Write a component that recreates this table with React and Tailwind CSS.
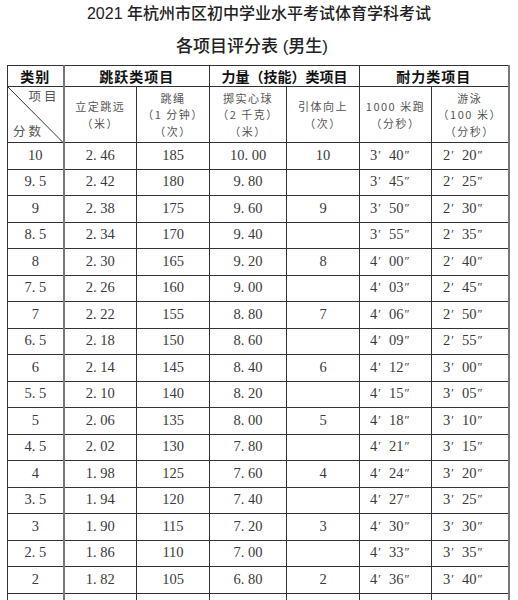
import React from "react";

const rows = [
  ["10", "2. 46", "185", "10. 00", "10", "3′", "40″", "2′", "20″"],
  ["9. 5", "2. 42", "180", "9. 80", "", "3′", "45″", "2′", "25″"],
  ["9", "2. 38", "175", "9. 60", "9", "3′", "50″", "2′", "30″"],
  ["8. 5", "2. 34", "170", "9. 40", "", "3′", "55″", "2′", "35″"],
  ["8", "2. 30", "165", "9. 20", "8", "4′", "00″", "2′", "40″"],
  ["7. 5", "2. 26", "160", "9. 00", "", "4′", "03″", "2′", "45″"],
  ["7", "2. 22", "155", "8. 80", "7", "4′", "06″", "2′", "50″"],
  ["6. 5", "2. 18", "150", "8. 60", "", "4′", "09″", "2′", "55″"],
  ["6", "2. 14", "145", "8. 40", "6", "4′", "12″", "3′", "00″"],
  ["5. 5", "2. 10", "140", "8. 20", "", "4′", "15″", "3′", "05″"],
  ["5", "2. 06", "135", "8. 00", "5", "4′", "18″", "3′", "10″"],
  ["4. 5", "2. 02", "130", "7. 80", "", "4′", "21″", "3′", "15″"],
  ["4", "1. 98", "125", "7. 60", "4", "4′", "24″", "3′", "20″"],
  ["3. 5", "1. 94", "120", "7. 40", "", "4′", "27″", "3′", "25″"],
  ["3", "1. 90", "115", "7. 20", "3", "4′", "30″", "3′", "30″"],
  ["2. 5", "1. 86", "110", "7. 00", "", "4′", "33″", "3′", "35″"],
  ["2", "1. 82", "105", "6. 80", "2", "4′", "36″", "3′", "40″"],
];

const serif = { fontFamily: '"Liberation Serif", "Noto Sans CJK SC", serif' };

function Time({ m, s }) {
  return (
    <span className="inline-flex items-baseline">
      <span>{m.replace("′", "")}</span>
      <span className="text-[12px] ml-[1px] mr-[8px] relative top-[-1px]">′</span>
      <span>{s.replace("″", "")}</span>
      <span className="text-[12px] ml-[1px] relative top-[-1px]">″</span>
    </span>
  );
}

export default function App() {
  const hd = "border border-[#333] text-center align-middle";
  const sub = "border border-[#333] text-center align-middle text-[11px] leading-[16.5px] tracking-[1.5px] text-[#555]";
  const cell = "border border-[#333] text-center";
  return (
    <div className="w-[518px] h-[600px] overflow-hidden bg-white">
      <div
        className="text-center text-[#222] font-medium"
        style={{ fontFamily: '"Liberation Sans", "Noto Sans CJK SC", sans-serif' }}
      >
        <div className="text-[16px] leading-[28px]">2021 年杭州市区初中学业水平考试体育学科考试</div>
        <div className="mt-[5px] text-[17px] leading-[28px] pr-[14px]">各项目评分表&nbsp;(男生)</div>
      </div>
      <table
        className="mt-[4px] ml-[7px] border-collapse table-fixed w-[501px]"
        style={{ fontFamily: '"Noto Sans CJK SC", sans-serif' }}
      >
        <colgroup>
          <col className="w-[56px]" />
          <col className="w-[73px]" />
          <col className="w-[73px]" />
          <col className="w-[77px]" />
          <col className="w-[73px]" />
          <col className="w-[72px]" />
          <col className="w-[77px]" />
        </colgroup>
        <thead>
          <tr className="h-[21px] text-[14px] font-bold text-[#111] leading-[18px]">
            <th className={hd + " tracking-[1px]"}>类别</th>
            <th colSpan={2} className={hd + " tracking-[1px] border-l-2 border-l-[#777]"}>跳跃类项目</th>
            <th colSpan={2} className={hd}>力量（技能）类项目</th>
            <th colSpan={2} className={hd + " tracking-[1px] border-r-2 border-r-[#777]"}>耐力类项目</th>
          </tr>
          <tr className="h-[55px]">
            <th className="border border-[#333] relative p-0 font-normal text-[12.5px] text-[#555] tracking-[3px]">
              <svg className="absolute inset-0 w-full h-full" preserveAspectRatio="none" viewBox="0 0 56 55">
                <line x1="0" y1="0" x2="56" y2="55" stroke="#333" strokeWidth="1" />
              </svg>
              <div className="flex flex-col h-[55px] justify-between pt-0 pb-[2px]">
                <div className="text-right pr-[3px] leading-[18px]">项目</div>
                <div className="text-left pl-[5px] leading-[18px]">分数</div>
              </div>
            </th>
            <th className={sub + " font-normal border-l-2 border-l-[#777]"}>
              <div>立定跳远</div>
              <div>（米）</div>
            </th>
            <th className={sub + " font-normal"}>
              <div>跳绳</div>
              <div>（1 分钟）</div>
              <div>（次）</div>
            </th>
            <th className={sub + " font-normal"}>
              <div>掷实心球</div>
              <div>（2 千克）</div>
              <div>（米）</div>
            </th>
            <th className={sub + " font-normal"}>
              <div>引体向上</div>
              <div>（次）</div>
            </th>
            <th className={sub + " font-normal"}>
              <div>1000 米跑</div>
              <div>（分秒）</div>
            </th>
            <th className={sub + " font-normal border-r-2 border-r-[#777]"}>
              <div>游泳</div>
              <div>（100 米）</div>
              <div>（分秒）</div>
            </th>
          </tr>
        </thead>
        <tbody className="text-[14.5px] text-[#3a3a3a]" style={serif}>
          {rows.map((r, i) => (
            <tr key={i} className="h-[26.5px]">
              <td className={cell}>{r[0]}</td>
              <td className={cell + " border-l-2 border-l-[#777]"}>{r[1]}</td>
              <td className={cell}>{r[2]}</td>
              <td className={cell}>{r[3]}</td>
              <td className={cell}>{r[4]}</td>
              <td className="border border-[#333] text-left pl-[10px]">
                <Time m={r[5]} s={r[6]} />
              </td>
              <td className="border border-[#333] border-r-2 border-r-[#777] text-left pl-[11px]">
                <Time m={r[7]} s={r[8]} />
              </td>
            </tr>
          ))}
          <tr className="h-[26.5px]">
            <td className={cell}></td>
            <td className={cell + " border-l-2 border-l-[#777]"}></td>
            <td className={cell}></td>
            <td className={cell}></td>
            <td className={cell}></td>
            <td className={cell}></td>
            <td className={cell + " border-r-2 border-r-[#777]"}></td>
          </tr>
        </tbody>
      </table>
    </div>
  );
}
